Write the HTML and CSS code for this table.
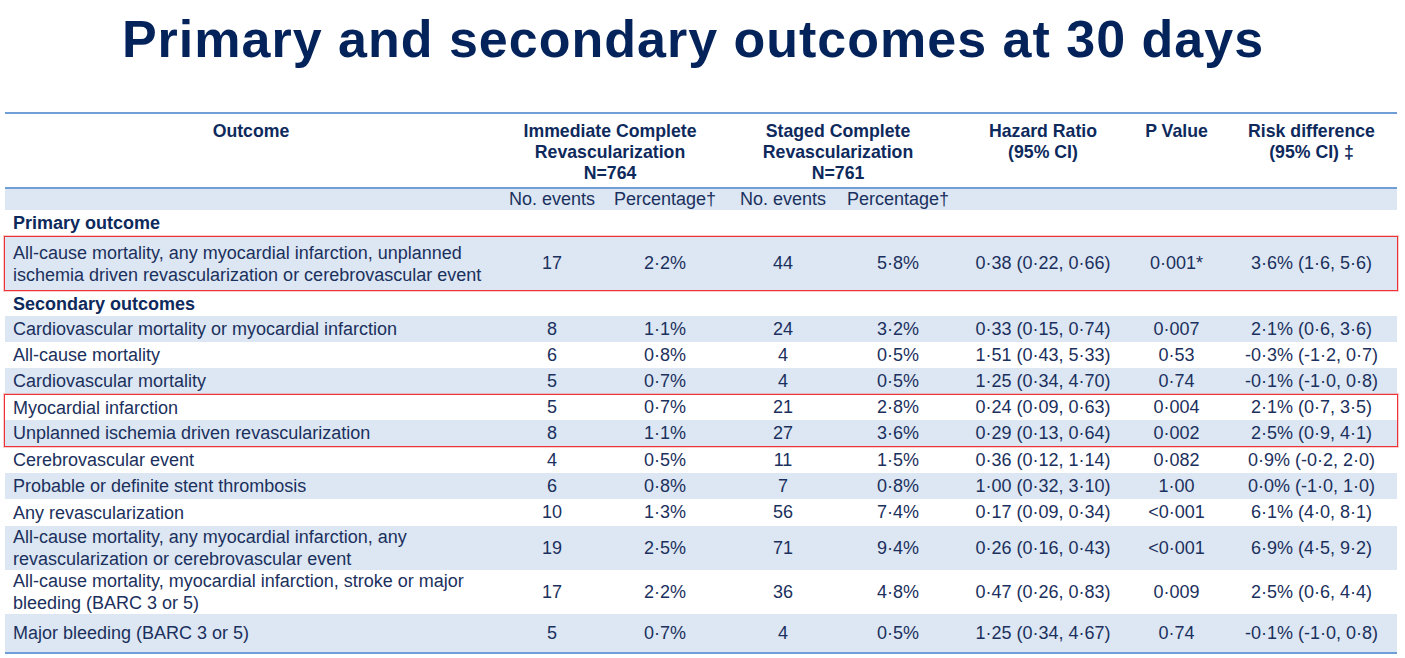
FILE: index.html
```html
<!DOCTYPE html>
<html lang="en">
<head>
<meta charset="utf-8">
<title>Primary and secondary outcomes at 30 days</title>
<link rel="stylesheet" href="styles.css">
</head>
<body>
<h1 class="title">Primary and secondary outcomes at 30 days</h1>
<div class="table">
  <div class="row head">
    <div class="c c-out">Outcome</div>
    <div class="c span2">Immediate Complete<br>Revascularization<br>N=764</div>
    <div class="c span2">Staged Complete<br>Revascularization<br>N=761</div>
    <div class="c">Hazard Ratio<br>(95% CI)</div>
    <div class="c">P Value</div>
    <div class="c rd">Risk difference<br>(95% CI) ‡</div>
  </div>
  <div class="row sub blue">
    <div class="c c-out"></div>
    <div class="c">No. events</div>
    <div class="c">Percentage†</div>
    <div class="c">No. events</div>
    <div class="c">Percentage†</div>
    <div class="c"></div>
    <div class="c"></div>
    <div class="c"></div>
  </div>
  <div class="row label h26">
    <div class="c c-out bold">Primary outcome</div>
  </div>
  <div class="box">
    <div class="row blue h53">
      <div class="c c-out">All-cause mortality, any myocardial infarction, unplanned ischemia driven revascularization or cerebrovascular event</div>
      <div class="c">17</div><div class="c">2·2%</div><div class="c">44</div><div class="c">5·8%</div>
      <div class="c">0·38 (0·22, 0·66)</div><div class="c">0·001*</div><div class="c rd">3·6% (1·6, 5·6)</div>
    </div>
  </div>
  <div class="row label h25">
    <div class="c c-out bold">Secondary outcomes</div>
  </div>
  <div class="row blue h26">
    <div class="c c-out">Cardiovascular mortality or myocardial infarction</div>
    <div class="c">8</div><div class="c">1·1%</div><div class="c">24</div><div class="c">3·2%</div>
    <div class="c">0·33 (0·15, 0·74)</div><div class="c">0·007</div><div class="c rd">2·1% (0·6, 3·6)</div>
  </div>
  <div class="row h26">
    <div class="c c-out">All-cause mortality</div>
    <div class="c">6</div><div class="c">0·8%</div><div class="c">4</div><div class="c">0·5%</div>
    <div class="c">1·51 (0·43, 5·33)</div><div class="c">0·53</div><div class="c rd">-0·3% (-1·2, 0·7)</div>
  </div>
  <div class="row blue h26">
    <div class="c c-out">Cardiovascular mortality</div>
    <div class="c">5</div><div class="c">0·7%</div><div class="c">4</div><div class="c">0·5%</div>
    <div class="c">1·25 (0·34, 4·70)</div><div class="c">0·74</div><div class="c rd">-0·1% (-1·0, 0·8)</div>
  </div>
  <div class="box">
    <div class="row h25">
      <div class="c c-out">Myocardial infarction</div>
      <div class="c">5</div><div class="c">0·7%</div><div class="c">21</div><div class="c">2·8%</div>
      <div class="c">0·24 (0·09, 0·63)</div><div class="c">0·004</div><div class="c rd">2·1% (0·7, 3·5)</div>
    </div>
    <div class="row blue h26">
      <div class="c c-out">Unplanned ischemia driven revascularization</div>
      <div class="c">8</div><div class="c">1·1%</div><div class="c">27</div><div class="c">3·6%</div>
      <div class="c">0·29 (0·13, 0·64)</div><div class="c">0·002</div><div class="c rd">2·5% (0·9, 4·1)</div>
    </div>
  </div>
  <div class="row h26">
    <div class="c c-out">Cerebrovascular event</div>
    <div class="c">4</div><div class="c">0·5%</div><div class="c">11</div><div class="c">1·5%</div>
    <div class="c">0·36 (0·12, 1·14)</div><div class="c">0·082</div><div class="c rd">0·9% (-0·2, 2·0)</div>
  </div>
  <div class="row blue h26">
    <div class="c c-out">Probable or definite stent thrombosis</div>
    <div class="c">6</div><div class="c">0·8%</div><div class="c">7</div><div class="c">0·8%</div>
    <div class="c">1·00 (0·32, 3·10)</div><div class="c">1·00</div><div class="c rd">0·0% (-1·0, 1·0)</div>
  </div>
  <div class="row h27">
    <div class="c c-out">Any revascularization</div>
    <div class="c">10</div><div class="c">1·3%</div><div class="c">56</div><div class="c">7·4%</div>
    <div class="c">0·17 (0·09, 0·34)</div><div class="c">&lt;0·001</div><div class="c rd">6·1% (4·0, 8·1)</div>
  </div>
  <div class="row blue h44">
    <div class="c c-out">All-cause mortality, any myocardial infarction, any revascularization or cerebrovascular event</div>
    <div class="c">19</div><div class="c">2·5%</div><div class="c">71</div><div class="c">9·4%</div>
    <div class="c">0·26 (0·16, 0·43)</div><div class="c">&lt;0·001</div><div class="c rd">6·9% (4·5, 9·2)</div>
  </div>
  <div class="row h44">
    <div class="c c-out">All-cause mortality, myocardial infarction, stroke or major bleeding (BARC 3 or 5)</div>
    <div class="c">17</div><div class="c">2·2%</div><div class="c">36</div><div class="c">4·8%</div>
    <div class="c">0·47 (0·26, 0·83)</div><div class="c">0·009</div><div class="c rd">2·5% (0·6, 4·4)</div>
  </div>
  <div class="row blue h38 last">
    <div class="c c-out">Major bleeding (BARC 3 or 5)</div>
    <div class="c">5</div><div class="c">0·7%</div><div class="c">4</div><div class="c">0·5%</div>
    <div class="c">1·25 (0·34, 4·67)</div><div class="c">0·74</div><div class="c rd">-0·1% (-1·0, 0·8)</div>
  </div>
</div>
</body>
</html>
```
FILE: styles.css
```css
html, body {
  margin: 0;
  padding: 0;
  background: #ffffff;
}
body {
  font-family: "Liberation Sans", Arial, sans-serif;
  color: #1b305d;
  width: 1405px;
  height: 658px;
  overflow: hidden;
}
.title {
  margin: 0;
  padding-top: 9px;
  height: 61px;
  font-size: 52px;
  letter-spacing: 1px;
  line-height: 60px;
  font-weight: 700;
  color: #03235a;
  text-align: center;
  padding-right: 19px;
}
.table {
  margin: 42px 0 0 5px;
  width: 1392px;
  font-size: 18px;
}
.row {
  display: grid;
  grid-template-columns: 492px 110px 116px 120px 110px 180px 87px 177px;
  align-items: center;
}
.c {
  text-align: center;
  white-space: nowrap;
}
.rd {
  padding-left: 6px;
}
.c-out {
  text-align: left;
  padding-left: 8px;
  white-space: normal;
  line-height: 22px;
}
.span2 {
  grid-column: span 2;
}
.bold {
  font-weight: 700;
  color: #0e2a5c;
}
.head {
  border-top: 2px solid #6f9fd6;
  border-bottom: 2px solid #6f9fd6;
  align-items: start;
  padding: 7px 0 0;
  height: 66px;
  font-weight: 700;
  color: #0e2a5c;
  line-height: 21px;
  font-size: 17.7px;
}
.head .c-out {
  text-align: center;
  padding-left: 0;
  line-height: 21px;
}
.sub {
  height: 21px;
  line-height: 21px;
}
.blue {
  background: #dce7f3;
}
.label {
  grid-template-columns: 1392px;
}
.h25 { height: 25px; }
.h26 { height: 26px; }
.h27 { height: 27px; }
.h38 { height: 38px; }
.h44 { height: 44px; }
.h53 { height: 53px; }
.box {
  border: 1px solid #ec3237;
  box-shadow: 0 0 0 1px rgba(240, 110, 110, 0.35);
  margin: 0 -1px;
}
.last {
  border-bottom: 2px solid #6f9fd6;
}
```
